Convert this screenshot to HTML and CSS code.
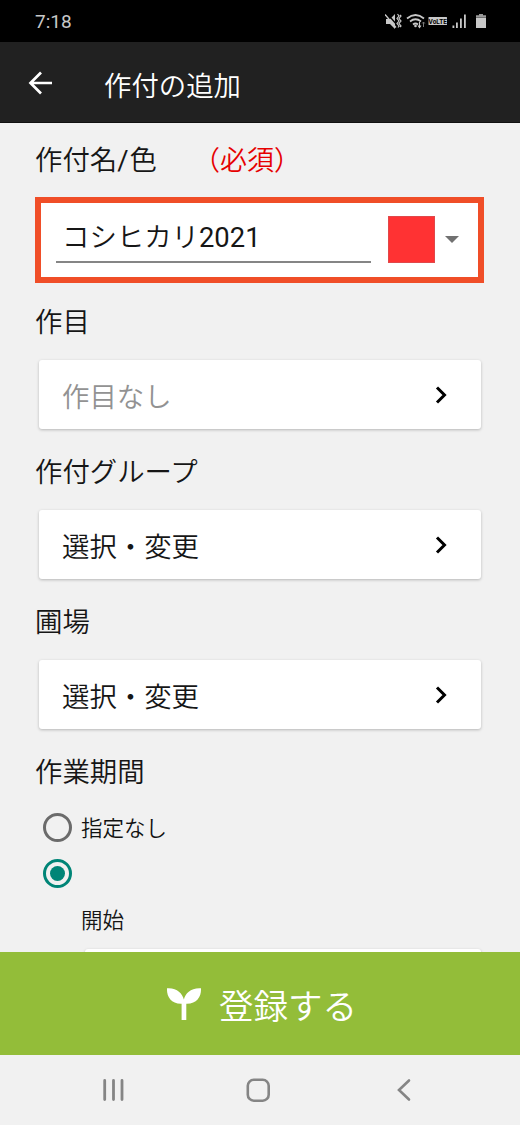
FILE: index.html
```html
<!DOCTYPE html>
<html lang="ja">
<head>
<meta charset="utf-8">
<title>作付の追加</title>
<link rel="stylesheet" href="styles.css">
</head>
<body>
<div class="screen">
  <div class="status">
    <span class="time">7:18</span>
    <svg class="status-icons" width="104" height="18" viewBox="0 0 104 18">
      <g fill="#c8c8c8">
        <path d="M1 6h4l5-5v15l-5-5H1z"/>
        <path d="M2 .5l10.500 12" stroke="#000" stroke-width="1.300"/>
        <path d="M0 1.500l11 13" stroke="#c8c8c8" stroke-width="1.400"/>
        <path d="M12.500 1l1.500 2-2 2.500 2 2.500-2 2.500 2 2.500-1 1.500M15 2l1 1-2 2.500 2 2.500-2 2.500 2 2.500-1 1" fill="none" stroke="#c8c8c8" stroke-width="1.200"/>
        <path d="M22 5.500q8.500-7 17 0M25 8.500q5.500-4.500 11 0M28 11.500q2.500-2 5 0" fill="none" stroke="#c8c8c8" stroke-width="1.700"/>
        <circle cx="30.500" cy="13" r="1.300"/>
        <path d="M34.500 9v5M33 12.500l1.500 2 1.500-2" fill="none" stroke="#c8c8c8" stroke-width="1.100"/>
        <path d="M38.500 14v-5M37.200 10.500l1.300-1.500 1.300 1.500" fill="none" stroke="#777" stroke-width="1"/>
        <rect x="43.500" y="4" width="18.500" height="8" rx=".5"/>
        <text x="52.700" y="10.500" class="volte" text-anchor="middle" fill="#000">VoLTE</text>
        <path d="M67.500 12.500h1.800v2.500h-1.800zM71 9.500h1.800V15H71zM75 5.500h1.800V15H75zM79 1.500h1.800V15H79z"/>
        <path d="M91 4.500h10V15H91z"/><path d="M94 1h4v1.200h3v2H91v-2h3z" fill="#999"/>
      </g>
    </svg>
  </div>
  <header class="appbar">
    <svg class="back" width="26" height="26" viewBox="0 0 26 26"><path d="M25 13H3M14 2.500L3.500 13 14 23.500" fill="none" stroke="#fff" stroke-width="2.700"/></svg>
    <h1 class="title">作付の追加</h1>
  </header>
  <main class="content">
    <div class="label first"><span>作付名<span class="latin slash">/</span>色</span><span class="required">（必須）</span></div>
    <div class="name-box">
      <div class="name-input">コシヒカリ<span class="latin">2021</span></div>
      <div class="swatch"></div>
      <svg class="caret" width="14" height="7" viewBox="0 0 14 7"><path d="M0 0h14L7 7z" fill="#717171"/></svg>
    </div>
    <div class="label after-name">作目</div>
    <div class="card placeholder"><span>作目なし</span><svg class="chev" width="14" height="20" viewBox="0 0 14 20"><path d="M3 2.500l7.500 7.500L3 17.500" fill="none" stroke="#000" stroke-width="3"/></svg></div>
    <div class="label">作付グループ</div>
    <div class="card"><span>選択・変更</span><svg class="chev" width="14" height="20" viewBox="0 0 14 20"><path d="M3 2.500l7.500 7.500L3 17.500" fill="none" stroke="#000" stroke-width="3"/></svg></div>
    <div class="label">圃場</div>
    <div class="card"><span>選択・変更</span><svg class="chev" width="14" height="20" viewBox="0 0 14 20"><path d="M3 2.500l7.500 7.500L3 17.500" fill="none" stroke="#000" stroke-width="3"/></svg></div>
    <div class="label">作業期間</div>
    <div class="radio-row"><span class="radio"></span><span class="radio-text">指定なし</span></div>
    <div class="radio-row"><span class="radio checked"></span></div>
    <div class="sub-label">開始</div>
    <div class="card date"></div>
  </main>
  <div class="submit">
    <svg class="sprout" width="36" height="34" viewBox="0 0 36 34"><path d="M1 1.200C11 .5 16 6 17.900 12.500 19.500 6 25 .5 35 1.200 35.500 9.500 31 17 20.300 16.700V33h-4.700V16.700C5 17 .5 9.500 1 1.200z" fill="#fff"/></svg>
    <span class="submit-text">登録する</span>
  </div>
  <nav class="navbar">
    <svg width="24" height="24" viewBox="0 0 24 24"><path d="M2.700 2.500v19M11.500 2.500v19M20 2.500v19" stroke="#858585" stroke-width="2.800" stroke-linecap="round"/></svg>
    <svg class="home" width="26" height="26" viewBox="0 0 26 26"><rect x="2.800" y="2.800" width="20.900" height="20.900" rx="6" fill="none" stroke="#858585" stroke-width="2.600"/></svg>
    <svg width="16" height="24" viewBox="0 0 16 24"><path d="M13 2.500L3 12l10 9.500" fill="none" stroke="#858585" stroke-width="2.600" stroke-linecap="round"/></svg>
  </nav>
</div>
</body>
</html>
```
FILE: styles.css
```css
* { box-sizing: border-box; }
body { margin: 0; }
.screen {
  width: 520px; height: 1125px; overflow: hidden;
  display: flex; flex-direction: column;
  background: #f1f1f1; color: #161616;
  font: 350 27.4px/40px Roboto, "Noto Sans CJK JP DemiLight", "Noto Sans CJK JP", sans-serif;
}
.latin { font-weight: 400; }
.slash { margin-right: 1px; }
.status {
  flex: none; height: 42px; padding: 0 33px 0 35px;
  display: flex; align-items: center; justify-content: space-between;
  background: #000; color: #c8c8c8;
}
.time { font-size: 19px; font-weight: 400; line-height: 42px; padding-top: 2px; }
.status-icons { margin: 2px -2px 0 0; }
.volte { font: 700 6.500px Roboto, sans-serif; }
.appbar {
  flex: none; height: 81px; padding-left: 27px;
  display: flex; align-items: center;
  background: #212121; color: #fff; border-bottom: 1px solid #111;
}
.back { margin-top: 2px; }
.title { margin: 9px 0 0 51px; font-size: 27.4px; font-weight: 350; line-height: 40px; }
.content { flex: 1; min-height: 0; overflow: hidden; padding: 18px 36px 0 35px; }
.label { height: 40px; margin: 24px 0 17px; white-space: nowrap; }
.label.first { display: flex; margin: 0 0 16px; }
.label.after-name { margin-top: 20px; margin-bottom: 17px; }
.required { margin-left: 36px; font-size: 27px; color: #e60000; }
.name-box {
  height: 86px; border: 6px solid #f04e28; background: #fff;
  display: flex; align-items: center; padding: 0 19px 0 15px;
}
.name-input { width: 315px; height: 46px; margin-top: -1px; padding: 1px 0 0 6px; border-bottom: 2px solid #858585; white-space: nowrap; }
.swatch { width: 47px; height: 47px; margin: -2px 10px 0 17px; background: #ff3233; border: 1px solid #e0484a; }
.caret { margin-top: -2px; }
.card {
  height: 69px; margin: 0 3px 0 4px; padding: 6px 33px 0 23px;
  display: flex; align-items: center; justify-content: space-between;
  background: #fff; border-radius: 3px; box-shadow: 0 1px 3px rgba(0,0,0,.25);
}
.chev { margin-top: -6px; }
.placeholder { color: #929292; }
.radio-row { height: 46px; padding-left: 8px; display: flex; align-items: center; gap: 9px; font-size: 21.500px; color: #111; }
.label + .radio-row { margin-top: -6px; }
.radio-text { padding-top: 3px; }
.radio { width: 29px; height: 29px; border: 3px solid #6b6b6b; border-radius: 50%; display: grid; place-items: center; }
.radio.checked { border-color: #008577; }
.radio.checked::after { content: ""; width: 15px; height: 15px; border-radius: 50%; background: #008577; }
.sub-label { padding-left: 46px; height: 30px; line-height: 30px; font-size: 21.500px; margin: 10px 0 13px; }
.date { margin-left: 50px; }
.submit {
  flex: none; height: 103px; background: #93bd39; color: #fff;
  display: flex; align-items: center; padding-left: 166px; gap: 17px;
  font-size: 34.500px;
}
.submit-text { padding-top: 7px; }
.navbar {
  flex: none; height: 70px; padding: 0 108px 0 102px;
  display: flex; align-items: center; justify-content: space-between;
}
.home { margin-right: 6px; }
```
